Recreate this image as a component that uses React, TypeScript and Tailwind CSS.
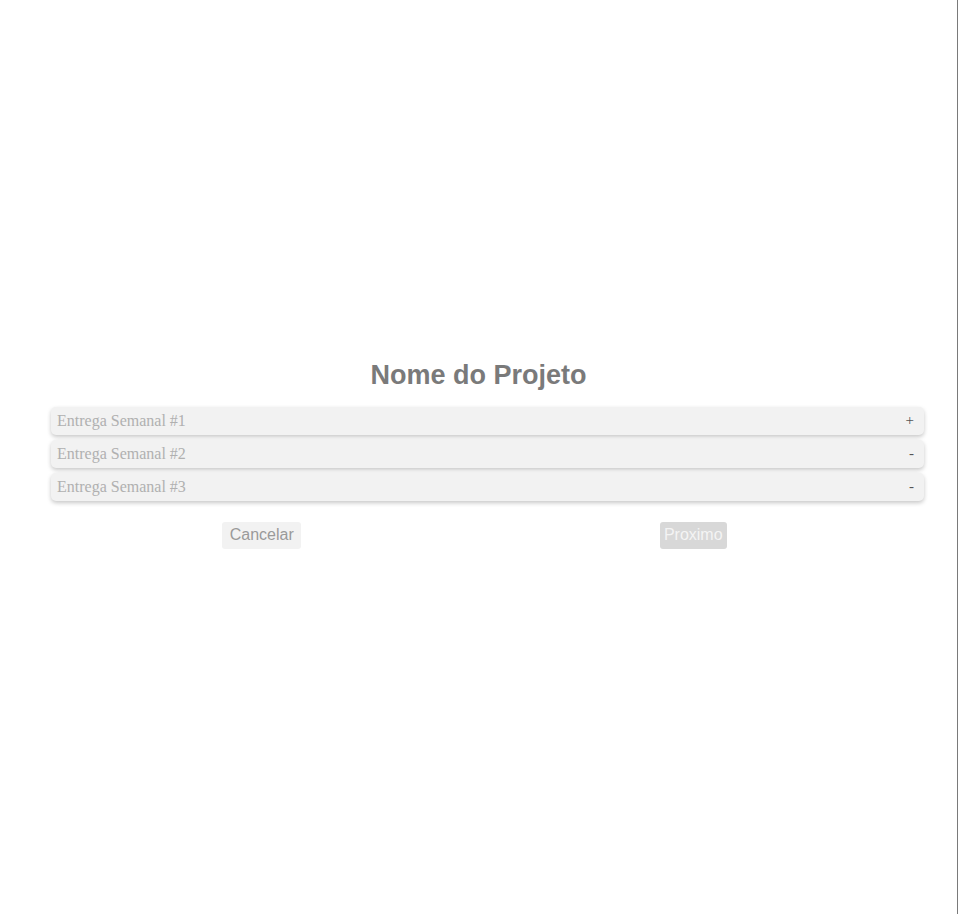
const entregas = [
  { title: 'Entrega Semanal #1', sign: '+' },
  { title: 'Entrega Semanal #2', sign: '-' },
  { title: 'Entrega Semanal #3', sign: '-' },
];

const App = () => {
  return (
    <div className="w-[958px] h-[914px] border-r border-[#7a7a7a] bg-white flex flex-col justify-center pb-[6px]">
      <h2 className="text-center text-[27px] leading-[31px] font-bold text-[#7a7a7a] font-['Liberation_Sans',Arial,sans-serif]">
        Nome do Projeto
      </h2>
      <div className="mt-[16px] ml-[51px] mr-[33px] flex flex-col gap-[5px]">
        {entregas.map((e) => (
          <div
            key={e.title}
            className="h-[28px] flex items-center justify-between pl-[6px] pr-[10px] bg-[#f2f2f2] rounded-[5px] shadow-[0_2px_4px_rgba(0,0,0,0.22)] font-['Liberation_Serif','Times_New_Roman',serif] text-[16px]"
          >
            <span className="text-[#b0b0b0]">{e.title}</span>
            <span className="text-[#555] text-[15px]">{e.sign}</span>
          </div>
        ))}
      </div>
      <div className="mt-[21px] ml-[43px] w-[863px] flex justify-around font-['Liberation_Sans',Arial,sans-serif] text-[16px]">
        <button className="h-[27px] w-[79px] rounded-[3px] bg-[#f2f2f2] text-[#9a9a9a]">Cancelar</button>
        <button className="h-[27px] w-[67px] rounded-[3px] bg-[#d8d8d8] text-[#f4f4f4]">Proximo</button>
      </div>
    </div>
  );
};

export default App;
